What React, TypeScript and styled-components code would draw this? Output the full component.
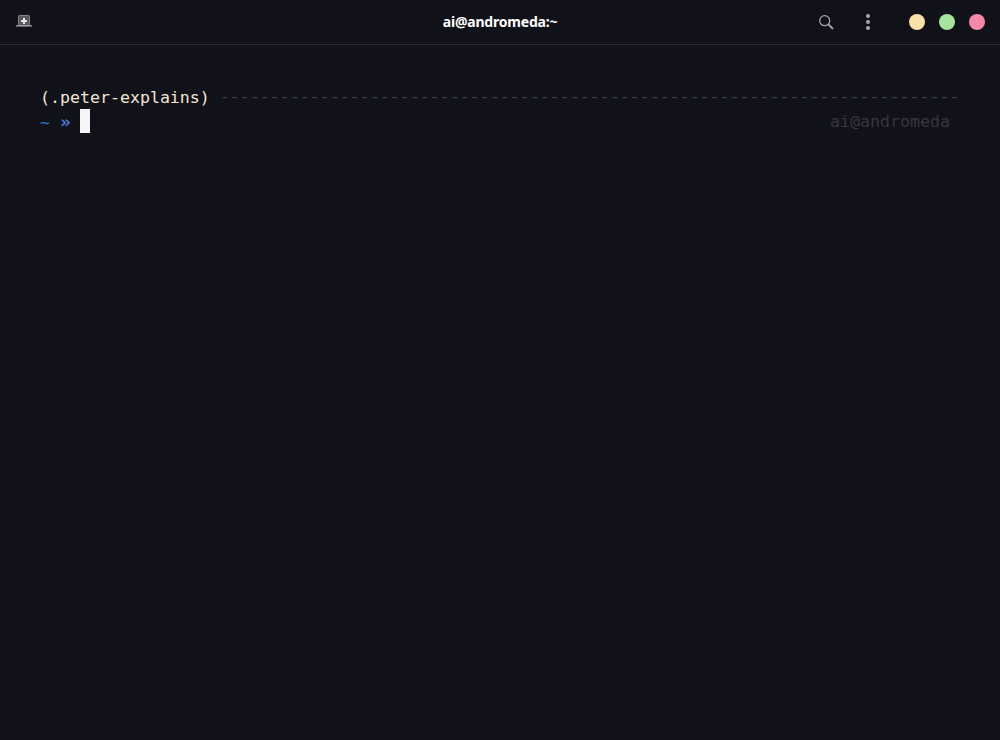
import React from "react";
import styled, { createGlobalStyle } from "styled-components";

const Global = createGlobalStyle`
  html, body { margin: 0; padding: 0; background: #11111a; }
  #root { width: 1000px; height: 740px; overflow: hidden; }
`;

const Window = styled.div`
  width: 1000px;
  height: 740px;
  background: #11111a;
  display: flex;
  flex-direction: column;
`;

const HeaderBar = styled.header`
  height: 44px;
  flex: none;
  border-bottom: 1px solid #2b2b33;
  display: grid;
  grid-template-columns: 1fr auto 1fr;
  align-items: center;
  padding: 0 15px 0 16px;
`;

const Group = styled.div<{ $end?: boolean }>`
  display: flex;
  align-items: center;
  justify-content: ${(p) => (p.$end ? "flex-end" : "flex-start")};
`;

const NewTabIcon = styled.svg`
  display: block;
  margin-bottom: 2px;
`;

const Title = styled.h1`
  margin: 0 1px 0 0;
  font: 700 14px/20px "Noto Sans", sans-serif;
  letter-spacing: -0.2px;
  color: #ffffff;
`;

const IconSlot = styled.span<{ $w: number; $mr?: number }>`
  display: flex;
  align-items: center;
  justify-content: center;
  width: ${(p) => p.$w}px;
  margin-right: ${(p) => p.$mr ?? 0}px;
`;

const Light = styled.span<{ $c: string }>`
  display: block;
  width: 16px;
  height: 16px;
  border-radius: 50%;
  background: ${(p) => p.$c};
  margin-left: 14px;
`;

const Lights = styled.div`
  display: flex;
  margin-left: 25px;
`;

const Terminal = styled.main`
  flex: 1;
  padding: 40px 40px 0;
  font: 400 16.6px/26px "DejaVu Sans Mono", monospace;
  color: #f3e6d3;
`;

const Row = styled.div`
  display: flex;
  height: 24px;
  white-space: pre;
  align-items: flex-start;
`;

const Dashes = styled.span`
  margin-left: 10px;
  font-family: "Liberation Mono", monospace;
  font-size: 16.67px;
  color: #3f3f46;
`;

const Prompt = styled.span`
  display: block;
  width: 40px;
`;

const Tilde = styled.span`
  color: #1f7fd0;
`;

const Chevron = styled.span`
  display: inline-block;
  width: 10px;
  font-size: 18px;
  font-weight: 700;
  line-height: 26px;
  color: #4f78d8;
`;

const Cursor = styled.span`
  display: block;
  width: 10px;
  height: 24px;
  background: #f4f5f4;
`;

const RightPrompt = styled.span`
  margin-left: auto;
  margin-right: 10px;
  color: #37373b;
`;

export default function App() {
  return (
    <Window>
      <Global />
      <HeaderBar>
        <Group>
          <NewTabIcon width="16" height="12" viewBox="0 0 16 12">
            <rect x="2.5" y="0.5" width="11" height="10" rx="1" fill="#55565c" stroke="#85868b" strokeWidth="1" />
            <path d="M0 10.9h16" stroke="#a9aaad" strokeWidth="1.3" />
            <path d="M8 3v6M5 6h6" stroke="#e6e6e8" strokeWidth="2" />
          </NewTabIcon>
        </Group>
        <Title>ai@andromeda:~</Title>
        <Group $end>
          <IconSlot $w={16} $mr={32}>
            <svg width="16" height="16" viewBox="0 0 16 16" fill="none" stroke="#a9a9ad">
              <circle cx="6.7" cy="6.7" r="5" strokeWidth="1.2" />
              <path d="M10.4 10.4L15 15" strokeWidth="1.8" />
            </svg>
          </IconSlot>
          <IconSlot $w={4}>
            <svg width="4" height="16" viewBox="0 0 4 16" fill="#a9a9ad">
              <circle cx="2" cy="2" r="2" />
              <circle cx="2" cy="8" r="2" />
              <circle cx="2" cy="14" r="2" />
            </svg>
          </IconSlot>
          <Lights>
            <Light $c="#fbdfa9" />
            <Light $c="#a6e39b" />
            <Light $c="#f588a8" />
          </Lights>
        </Group>
      </HeaderBar>
      <Terminal>
        <Row>
          (.peter-explains)
          <Dashes>{"-".repeat(74)}</Dashes>
        </Row>
        <Row>
          <Prompt>
            <Tilde>~</Tilde> <Chevron>»</Chevron>
          </Prompt>
          <Cursor />
          <RightPrompt>ai@andromeda</RightPrompt>
        </Row>
      </Terminal>
    </Window>
  );
}
